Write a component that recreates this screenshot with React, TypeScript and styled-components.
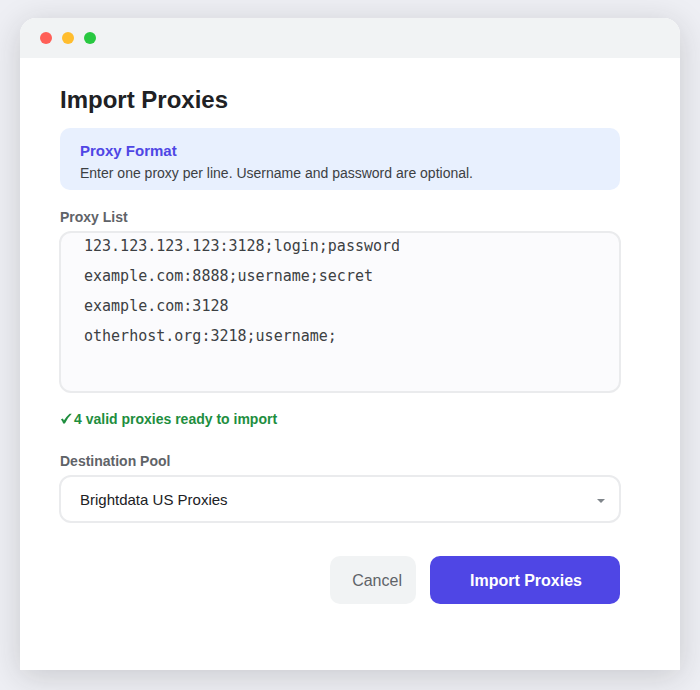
import React, { useState } from "react";
import styled, { createGlobalStyle } from "styled-components";

const GlobalStyle = createGlobalStyle`
  * { box-sizing: border-box; }
  body {
    margin: 0;
    background: #eeeff4;
    font-family: "Liberation Sans", Arial, sans-serif;
    color: #202124;
  }
  button, select, textarea { font: inherit; }
`;

const Page = styled.main`
  display: flex;
  min-height: 100vh;
  padding: 18px 20px 20px;
`;

const Window = styled.section`
  flex: 1;
  min-width: 0;
  background: #ffffff;
  border-radius: 16px 16px 0 0;
  box-shadow: 0 6px 32px rgba(32, 33, 36, 0.18);
`;

const TitleBar = styled.header`
  display: flex;
  align-items: center;
  gap: 10px;
  height: 40px;
  padding: 0 20px;
  background: #f1f3f4;
  border-radius: 16px 16px 0 0;
`;

const Light = styled.span<{ $color: string }>`
  width: 12px;
  height: 12px;
  border-radius: 50%;
  background: ${(p) => p.$color};
`;

const Form = styled.form`
  display: flex;
  flex-direction: column;
  padding: 28px 60px 40px 40px;
`;

const Title = styled.h1`
  margin: 0 0 14px;
  font-size: 24px;
  line-height: 28px;
`;

const Notice = styled.div`
  padding: 14px 20px 7px;
  border-radius: 10px;
  background: #e8f0fe;
`;

const NoticeTitle = styled.h2`
  margin: 0 0 3px;
  font-size: 15px;
  line-height: 18px;
  color: #4f46e5;
`;

const NoticeText = styled.p`
  margin: 0;
  font-size: 14px;
  line-height: 20px;
  color: #3c4043;
`;

const Label = styled.label`
  margin: 19px 0 6px;
  font-size: 14px;
  line-height: 16px;
  font-weight: 700;
  color: #5f6368;
`;

const Frame = styled.div<{ $fill: string }>`
  display: grid;
  align-items: center;
  margin: 0 -1px;
  border: 2px solid #eaebed;
  border-radius: 12px;
  background: ${(p) => p.$fill};
`;

const ProxyInput = styled.textarea`
  display: block;
  height: 162px;
  margin: -2px;
  padding: 0 25px;
  border: 0;
  border-radius: 12px;
  outline: none;
  resize: none;
  overflow: auto;
  background: transparent;
  font-family: "DejaVu Sans Mono", monospace;
  font-size: 15px;
  line-height: 30px;
  color: #3c4043;
`;

const Status = styled.p`
  display: flex;
  align-items: center;
  gap: 2px;
  margin: 17px 0 6px;
  font-size: 14px;
  line-height: 18px;
  font-weight: 700;
  color: #1e8e3e;
`;

const PoolSelect = styled.select`
  grid-area: 1 / 1;
  width: 100%;
  height: 44px;
  padding: 0 40px 0 19px;
  border: 0;
  outline: none;
  appearance: none;
  background: transparent;
  font-size: 15px;
  color: #202124;
`;

const Caret = styled.svg`
  grid-area: 1 / 1;
  justify-self: end;
  margin: 4px 14px 0 0;
  pointer-events: none;
`;

const Actions = styled.div`
  display: flex;
  justify-content: flex-end;
  gap: 14px;
  margin-top: 33px;
`;

const Button = styled.button<{ $primary?: boolean }>`
  height: 48px;
  padding: ${(p) => (p.$primary ? "2px 38px 0 40px" : "2px 14px 0 22px")};
  border: 0;
  border-radius: 10px;
  background: ${(p) => (p.$primary ? "#4f46e5" : "#f1f3f4")};
  color: ${(p) => (p.$primary ? "#ffffff" : "#5f6368")};
  font-size: 16px;
  font-weight: ${(p) => (p.$primary ? 700 : 400)};
`;

const SAMPLE = [
  "123.123.123.123:3128;login;password",
  "example.com:8888;username;secret",
  "example.com:3128",
  "otherhost.org:3218;username;",
].join("\n");

export default function App() {
  const [proxies, setProxies] = useState(SAMPLE);
  const count = proxies.split("\n").filter((line) => line.trim()).length;

  return (
    <>
      <GlobalStyle />
      <Page>
        <Window>
          <TitleBar>
            <Light $color="#ff5f57" />
            <Light $color="#ffbd2e" />
            <Light $color="#28c840" />
          </TitleBar>
          <Form onSubmit={(e) => e.preventDefault()}>
            <Title>Import Proxies</Title>
            <Notice>
              <NoticeTitle>Proxy Format</NoticeTitle>
              <NoticeText>
                Enter one proxy per line. Username and password are optional.
              </NoticeText>
            </Notice>
            <Label htmlFor="proxies">Proxy List</Label>
            <Frame $fill="#fbfbfd">
              <ProxyInput
                id="proxies"
                spellCheck={false}
                value={proxies}
                onChange={(e) => setProxies(e.target.value)}
              />
            </Frame>
            <Status>
              <svg width="12" height="12" viewBox="0 0 12 12" aria-hidden="true">
                <path
                  d="M0.9 6.6 L2.8 5.6 Q3.5 6.4 3.9 7.6 Q6.4 3.4 9.6 0.7 L11.8 0.7 Q7.4 4.8 4.9 10.4 L3.2 10.4 Q2.2 7.8 0.9 6.6 Z"
                  fill="currentColor"
                />
              </svg>
              {count} valid proxies ready to import
            </Status>
            <Label htmlFor="pool">Destination Pool</Label>
            <Frame $fill="#ffffff">
              <PoolSelect id="pool">
                <option>Brightdata US Proxies</option>
              </PoolSelect>
              <Caret width="8" height="4" viewBox="0 0 8 4" aria-hidden="true">
                <path d="M0 0 H8 L4 4 Z" fill="#80868b" />
              </Caret>
            </Frame>
            <Actions>
              <Button type="button">Cancel</Button>
              <Button type="submit" $primary>
                Import Proxies
              </Button>
            </Actions>
          </Form>
        </Window>
      </Page>
    </>
  );
}
